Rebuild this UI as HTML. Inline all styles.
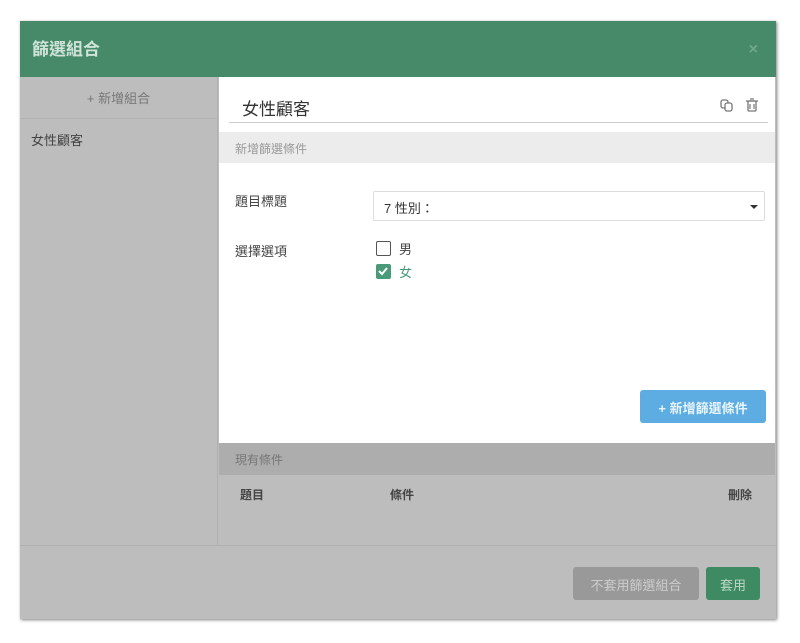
<!DOCTYPE html>
<html><head><meta charset="utf-8"><style>
*{box-sizing:border-box;margin:0;padding:0}
body{width:800px;height:643px;background:#fff;font-family:"Liberation Sans","Noto Sans CJK TC",sans-serif;position:relative;overflow:hidden}
.modal{position:absolute;left:20px;top:21px;width:756px;height:598px;background:#bdbdbd;box-shadow:1px 1px 3px rgba(0,0,0,.5)}
.hdr{position:absolute;left:0;top:0;width:756px;height:56px;background:#468a6a;color:#cfe3d8;font-size:17px;font-weight:bold;padding:14px 12px}
.x{position:absolute;right:18px;top:20px;font-size:16px;color:#6fa88c}
.side{position:absolute;left:0;top:56px;width:198px;height:468px;background:#bdbdbd;border-right:1px solid #b0b0b0}
.add{height:42px;border-bottom:1px solid #b3b3b3;text-align:center;font-size:13px;color:#777;padding-top:11px}
.item{font-size:13px;color:#444;padding:11px 11px}
.main{position:absolute;left:199px;top:56px;width:556px;height:366px;background:#fff}
.name{position:absolute;left:10px;top:10px;width:539px;height:36px;border-bottom:1px solid #ccc;font-size:17px;color:#333;padding:8px 13px}
.icons{position:absolute;right:8px;top:10px}
.sec{position:absolute;left:0;top:55px;width:556px;height:31px;background:#ececec;font-size:12px;color:#999;padding:8px 16px}
.lbl{position:absolute;left:16px;font-size:13px;color:#444}
.sel{position:absolute;left:154px;top:114px;width:392px;height:30px;border:1px solid #ddd;border-radius:2px;font-size:13px;color:#333;padding:6px 10px}
.sel:after{content:"";position:absolute;right:6px;top:13px;border:4px solid transparent;border-top:4px solid #333}
.cb{position:absolute;left:157px;width:15px;height:15px;border:1.5px solid #555;border-radius:2px}
.cb.on{background:#4a9a7a;border-color:#4a9a7a}
.ct{position:absolute;left:180px;font-size:13px;color:#444}
.btn{position:absolute;left:421px;top:313px;width:126px;height:33px;background:#5dade2;border-radius:3px;color:#e8f4fb;font-size:13px;font-weight:bold;text-align:center;padding-top:8px}
.cur{position:absolute;left:199px;top:422px;width:556px;height:32px;background:#adadad;font-size:12px;color:#777;padding:8px 16px}
.th{position:absolute;top:465px;font-size:12px;font-weight:bold;color:#444}
.foot{position:absolute;left:0;top:524px;width:756px;height:1px;background:#b0b0b0}
.b1{position:absolute;left:553px;top:546px;width:126px;height:33px;background:#999;border-radius:3px;color:#ccc;font-size:13px;text-align:center;padding-top:8px}
.b2{position:absolute;left:686px;top:546px;width:54px;height:33px;background:#3e8a62;border-radius:3px;color:#bcd8c8;font-size:13px;text-align:center;padding-top:8px}
</style></head><body>
<div class="modal">
<div class="hdr">篩選組合<span class="x">×</span></div>
<div class="side"><div class="add">+ 新增組合</div><div class="item">女性顧客</div></div>
<div class="main">
<div class="name">女性顧客<span class="icons"><svg width="40" height="14" viewBox="0 0 40 14"><rect x="1" y="2" width="7" height="8" rx="2" fill="none" stroke="#777" stroke-width="1.3"/><rect x="5" y="5" width="7" height="8" rx="2" fill="#fff" stroke="#777" stroke-width="1.3"/><rect x="28" y="3" width="8" height="10" rx="1" fill="none" stroke="#777" stroke-width="1.3"/><path d="M26 3h12M30 1h4M30 6v5M34 6v5" stroke="#777" stroke-width="1.2"/></svg></span></div>
<div class="sec">新增篩選條件</div>
<div class="lbl" style="top:114px">題目標題</div>
<div class="sel">7 性別：</div>
<div class="lbl" style="top:164px">選擇選項</div>
<div class="cb" style="top:164px"></div><div class="ct" style="top:162px">男</div>
<div class="cb on" style="top:187px"><svg width="12" height="12" viewBox="0 0 12 12" style="position:absolute;left:0;top:0"><path d="M2 6l3 3 5-6" stroke="#fff" stroke-width="2" fill="none"/></svg></div><div class="ct" style="top:185px;color:#4a9a7a">女</div>
<div class="btn">+ 新增篩選條件</div>
</div>
<div class="cur">現有條件</div>
<div class="th" style="left:220px">題目</div>
<div class="th" style="left:370px">條件</div>
<div class="th" style="left:708px">刪除</div>
<div class="foot"></div>
<div class="b1">不套用篩選組合</div>
<div class="b2">套用</div>
</div>
</body></html>
